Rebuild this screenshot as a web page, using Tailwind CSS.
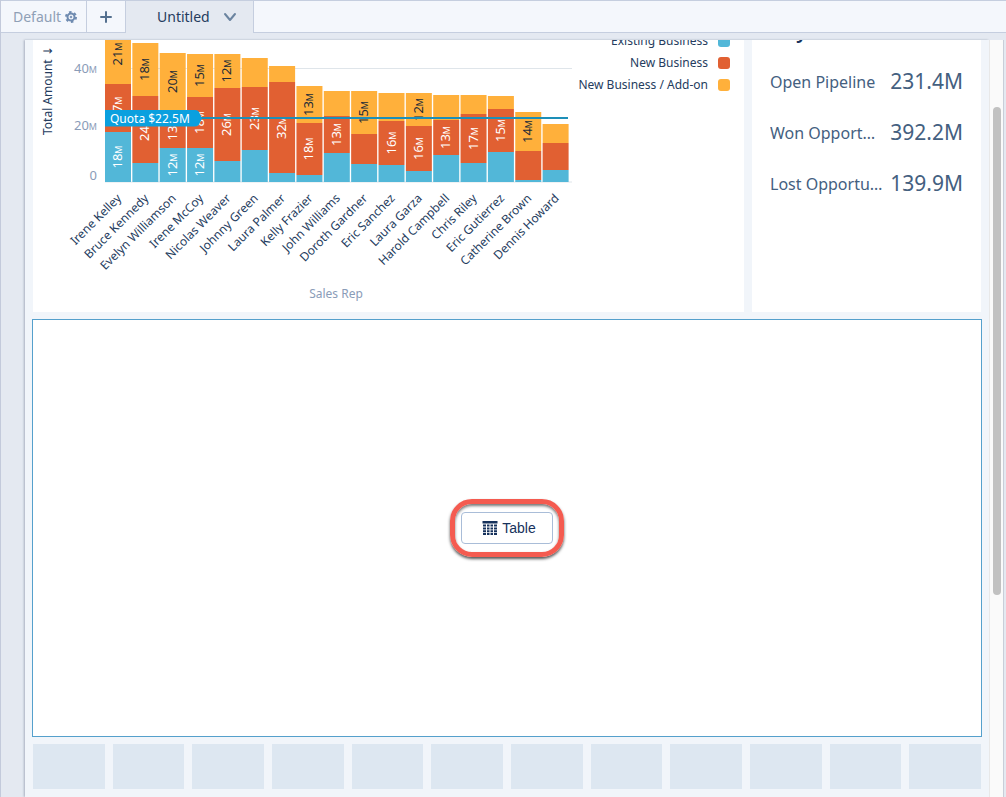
<!DOCTYPE html>
<html lang="en">

<head>
    <meta charset="UTF-8">
    <meta name="viewport" content="width=device-width, initial-scale=1.0">
    <title>Dashboard Designer</title>
    <script src="https://cdn.jsdelivr.net/npm/@tailwindcss/browser@4"></script>
</head>

<body class="h-screen flex flex-col overflow-hidden bg-[#e4e9f1] border-l border-[#c3cadb] font-['Noto_Sans',sans-serif] text-[#253c5e]">
    <header class="flex shrink-0 h-[33px] bg-[#f4f7fc] border-y border-[#c5cedf] text-sm">
        <button class="flex items-center gap-1 pl-3 w-[86px] border-r border-[#c5cedf] text-[#8fa0b6]">
            Default
            <svg class="w-3 h-3" viewBox="0 0 24 24" fill="none" stroke="#6f8bb0">
                <circle cx="12" cy="12" r="7" stroke-width="4" />
                <circle cx="12" cy="12" r="10" stroke-width="4" stroke-dasharray="5 5.47" />
                <circle cx="12" cy="12" r="2" fill="#6f8bb0" />
            </svg>
        </button>
        <button aria-label="Add page" class="flex items-center justify-center w-[39px] border-r border-[#c5cedf]">
            <svg class="w-3 h-3" viewBox="0 0 12 12" stroke="#54708f" stroke-width="2" stroke-linecap="round">
                <path d="M6 1v10M1 6h10" />
            </svg>
        </button>
        <button class="flex items-center justify-between pl-[31px] pr-4 w-32 h-8 bg-[#e4e9f1] border-r border-[#c5cedf]">
            Untitled
            <svg class="w-3.5 h-3.5" viewBox="0 0 14 14" fill="none" stroke="#6b84a0" stroke-width="2" stroke-linecap="round" stroke-linejoin="round">
                <path d="M2 4l5 6 5-6" />
            </svg>
        </button>
    </header>

    <div class="flex flex-1 min-h-0 pt-[7px] pl-6 pr-0.5">
        <main class="flex flex-col flex-1 min-w-0 gap-[7px] pl-[7px] pr-[7px] bg-[#f1f5fa] shadow-[-1px_0_2px_#a9b0c0]">
            <div class="flex gap-2 h-[272px] px-px">
                <section class="relative flex-1 min-w-0 bg-white overflow-hidden">
                    <svg id="chart" class="block w-[545px] h-[272px]" viewBox="33 40 545 272"></svg>
                    <ul class="absolute top-[-10px] right-3.5 flex flex-col text-xs leading-[22px]">
                        <li class="flex items-center justify-end gap-2.5">Existing Business <span class="w-3 h-3 rounded-[3px] bg-[#52b7d8]"></span></li>
                        <li class="flex items-center justify-end gap-2.5">New Business <span class="w-3 h-3 rounded-[3px] bg-[#e16032]"></span></li>
                        <li class="flex items-center justify-end gap-2.5">New Business / Add-on <span class="w-3 h-3 rounded-[3px] bg-[#ffb03b]"></span></li>
                    </ul>
                </section>
                <section class="relative w-[229px] pl-[18px] pr-[18px] pt-4 bg-white overflow-hidden text-[#44607f]">
                    <h2 class="absolute top-[-21px] left-5 text-xl leading-6 font-semibold text-[#16325c]">Key Metrics</h2>
                    <dl class="flex flex-col">
                        <div class="flex items-center justify-between h-[51px]">
                            <dt class="w-[115px] truncate">Open Pipeline</dt>
                            <dd class="text-[21px]">231.4M</dd>
                        </div>
                        <div class="flex items-center justify-between h-[51px]">
                            <dt class="w-[115px] truncate">Won Opportunities</dt>
                            <dd class="text-[21px]">392.2M</dd>
                        </div>
                        <div class="flex items-center justify-between h-[51px]">
                            <dt class="w-[115px] truncate">Lost Opportunities</dt>
                            <dd class="text-[21px]">139.9M</dd>
                        </div>
                    </dl>
                </section>
            </div>

            <section class="flex items-center justify-center h-[418px] bg-white border border-[#55a0cc]">
                <div class="px-1.5 py-2 rounded-[22px] border-[5px] border-[#f45b50] shadow-[0_2px_3px_#555,inset_0_2px_3px_#777]">
                    <button class="flex items-center justify-center gap-1 w-[92px] h-8 pl-1 rounded border border-[#a9bdd8] bg-white font-['Liberation_Sans',sans-serif] text-sm text-[#16325c]">
                        <svg class="w-4 h-4" viewBox="0 0 16 16" fill="#16325c">
                            <path d="M0.500 1h15v2.500h-15zM1 4.500h3v2H1zM5 4.500h2.500v2H5zM8.500 4.500H11v2H8.500zM12 4.500h3v2h-3zM1 7.500h3v2H1zM5 7.500h2.500v2H5zM8.500 7.500H11v2H8.500zM12 7.500h3v2h-3zM1 10.300h3v2H1zM5 10.300h2.500v2H5zM8.500 10.300H11v2H8.500zM12 10.300h3v2h-3zM1 13h3v2H1zM5 13h2.500v2H5zM8.500 13H11v2H8.500zM12 13h3v2h-3z" />
                        </svg>
                        Table
                    </button>
                </div>
            </section>

            <!-- empty grid cells -->
            <div class="grid grid-cols-12 gap-2 h-[45px] px-px">
                <span class="bg-[#dde7f1]"></span>
                <span class="bg-[#dde7f1]"></span>
                <span class="bg-[#dde7f1]"></span>
                <span class="bg-[#dde7f1]"></span>
                <span class="bg-[#dde7f1]"></span>
                <span class="bg-[#dde7f1]"></span>
                <span class="bg-[#dde7f1]"></span>
                <span class="bg-[#dde7f1]"></span>
                <span class="bg-[#dde7f1]"></span>
                <span class="bg-[#dde7f1]"></span>
                <span class="bg-[#dde7f1]"></span>
                <span class="bg-[#dde7f1]"></span>
            </div>
        </main>
        <div class="w-[15px] shrink-0 pt-[67px] bg-[#fafafa] border-x border-l-[#e8e8e8] border-r-[#c9ced8]">
            <div class="w-2 h-[488px] mx-auto rounded-full bg-[#c1c1c1]"></div>
        </div>
    </div>

    <script>
        // [rep, top, add-on/new edge, new/existing edge, add-on label, new label, existing label]
        const reps = [
            ['Irene Kelley', 24, 84, 132, '21', '17', '18'],
            ['Bruce Kennedy', 43, 96, 163, '18', '24', ''],
            ['Evelyn Williamson', 53, 110, 148, '20', '13', '12'],
            ['Irene McCoy', 54, 97, 148, '15', '18', '12'],
            ['Nicolas Weaver', 54, 88, 161, '12', '26', ''],
            ['Johnny Green', 58, 87, 150, '', '23', ''],
            ['Laura Palmer', 66, 82, 173, '', '32', ''],
            ['Kelly Frazier', 86, 123, 175, '13', '18', ''],
            ['John Williams', 91, 116, 153, '', '13', ''],
            ['Doroth Gardner', 91, 134, 164, '15', '', ''],
            ['Eric Sanchez', 93, 121, 165, '', '16', ''],
            ['Laura Garza', 93, 126, 171, '12', '16', ''],
            ['Harold Campbell', 95, 120, 155, '', '13', ''],
            ['Chris Riley', 95, 114, 163, '', '17', ''],
            ['Eric Gutierrez', 96, 109, 152, '', '15', ''],
            ['Catherine Brown', 112, 151, 180, '14', '', ''],
            ['Dennis Howard', 124, 143, 170, '', '', '']
        ];
        const fills = ['#ffb03b', '#e16032', '#52b7d8'];
        const inks = ['#222b38', '#ffffff', '#ffffff'];
        const base = 182;

        const million = (n) => `${n}<tspan font-size="9">M</tspan>`;

        let out = `<path d="M105 68.5H572M105 182H572" stroke="#dfe5ea"/>
            <text x="97" y="73" font-size="13" fill="#8a9cb8" text-anchor="end">${million(40)}</text>
            <text x="97" y="130" font-size="13" fill="#8a9cb8" text-anchor="end">${million(20)}</text>
            <text x="97" y="180" font-size="13" fill="#8a9cb8" text-anchor="end">0</text>
            <text transform="translate(52 135) rotate(-90)" font-size="12" fill="#253c5e">Total Amount <tspan font-family="DejaVu Sans" font-size="12">↓</tspan></text>
            <text x="336" y="298" font-size="12" fill="#8a9cb8" text-anchor="middle">Sales Rep</text>`;

        reps.forEach((rep, i) => {
            const x = 105 + i * 27.35;
            const edges = [rep[1], rep[2], rep[3], base];
            for (let s = 0; s < 3; s++) {
                out += `<rect x="${x}" y="${edges[s]}" width="26" height="${edges[s + 1] - edges[s]}" fill="${fills[s]}"/>`;
                if (rep[4 + s]) {
                    const mid = (edges[s] + edges[s + 1]) / 2;
                    out += `<text transform="translate(${x + 17} ${mid}) rotate(-90)" font-size="13" fill="${inks[s]}" text-anchor="middle">${million(rep[4 + s])}</text>`;
                }
            }
            out += `<text transform="translate(${x + 17} 199) rotate(-45)" font-size="12" fill="#253c5e" text-anchor="end">${rep[0]}</text>`;
        });

        // quota marker
        out += `<path d="M198 118H568" stroke="#1d8fb8" stroke-width="2"/>
            <path d="M105 110H195q3 0 4 2l3 6.500-3 6q-1 2-4 2H105z" fill="#0aa0df"/>
            <text x="110" y="123" font-size="12" fill="#ffffff">Quota $22.5M</text>`;

        document.getElementById('chart').innerHTML = out;
    </script>
</body>

</html>
